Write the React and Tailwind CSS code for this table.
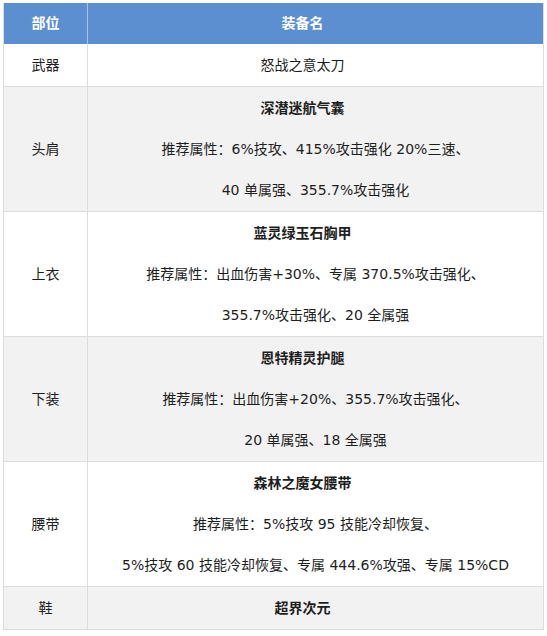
import React from "react";

const rows = [
  { part: "武器", lines: [{ t: "怒战之意太刀", c: "pr-[26px]" }], bg: "bg-white" },
  {
    part: "头肩",
    lines: [
      { t: "深潜迷航气囊", b: true, c: "pr-[26px]" },
      { t: "推荐属性：6%技攻、415%攻击强化 20%三速、", c: "" },
      { t: "40 单属强、355.7%攻击强化", c: "" },
    ],
    bg: "bg-[#f2f2f2]",
  },
  {
    part: "上衣",
    lines: [
      { t: "蓝灵绿玉石胸甲", b: true, c: "pr-[26px]" },
      { t: "推荐属性：出血伤害+30%、专属 370.5%攻击强化、", c: "" },
      { t: "355.7%攻击强化、20 全属强", c: "" },
    ],
    bg: "bg-white",
  },
  {
    part: "下装",
    lines: [
      { t: "恩特精灵护腿", b: true, c: "pr-[26px]" },
      { t: "推荐属性：出血伤害+20%、355.7%攻击强化、", c: "" },
      { t: "20 单属强、18 全属强", c: "" },
    ],
    bg: "bg-[#f2f2f2]",
  },
  {
    part: "腰带",
    lines: [
      { t: "森林之魔女腰带", b: true, c: "pr-[26px]" },
      { t: "推荐属性：5%技攻 95 技能冷却恢复、", c: "" },
      { t: "5%技攻 60 技能冷却恢复、专属 444.6%攻强、专属 15%CD", c: "" },
    ],
    bg: "bg-white",
  },
  { part: "鞋", lines: [{ t: "超界次元", b: true, c: "pr-[26px]" }], bg: "bg-[#f2f2f2]" },
];

export default function App() {
  return (
    <div
      className="w-[547px] h-[636px] bg-white pt-[3px] pl-[3px] text-[14px] text-[#1e1e1e]"
      style={{ fontFamily: '"DejaVu Sans", "Noto Sans CJK SC", sans-serif' }}
    >
      <div className="w-[541px] border-l border-[#dcdcdc]">
        <div className="grid grid-cols-[84px_1fr] bg-[#5b8fd0] text-white font-bold h-[41px]">
          <div className="flex items-center justify-center border-r border-[#a9c4e6]">部位</div>
          <div className="flex items-center justify-center border-r border-[#dcdcdc] pr-[26px]">装备名</div>
        </div>
        {rows.map((r, i) => (
          <div
            key={i}
            className={`grid grid-cols-[84px_1fr] border-b border-[#dcdcdc] ${r.bg}`}
          >
            <div className="flex items-center justify-center border-r border-[#dcdcdc] pt-px">
              {r.part}
            </div>
            <div className="flex flex-col items-center border-r border-[#dcdcdc] pt-px">
              {r.lines.map((l, j) => (
                <div
                  key={j}
                  className={`h-[41px] leading-[41px] whitespace-nowrap ${l.b ? "font-bold" : ""} ${l.c}`}
                >
                  {l.t}
                </div>
              ))}
            </div>
          </div>
        ))}
      </div>
    </div>
  );
}
